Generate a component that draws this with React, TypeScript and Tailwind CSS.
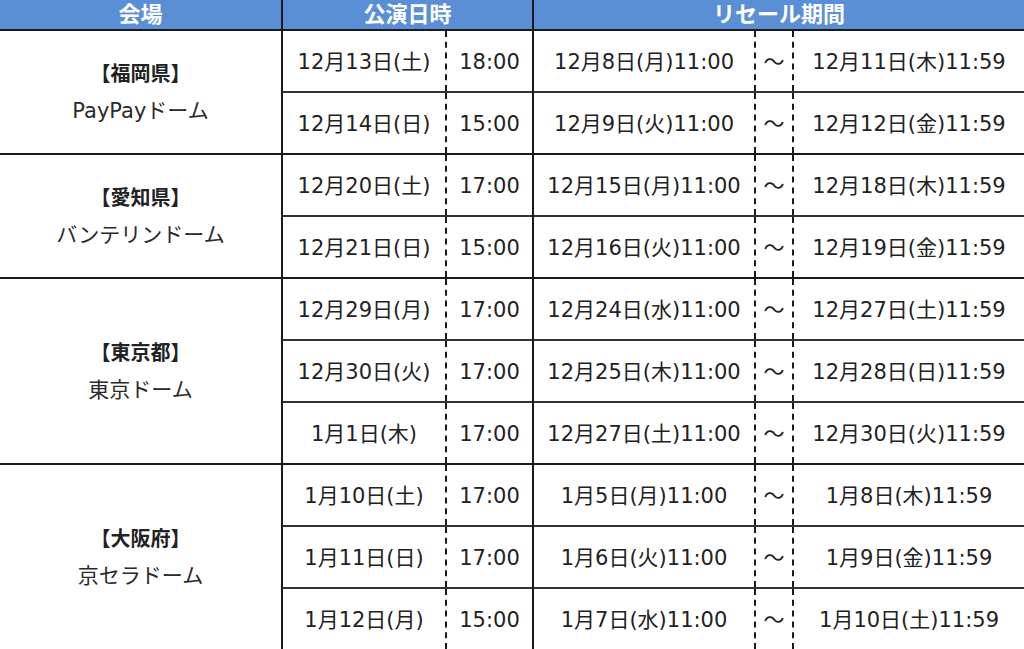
const font = { fontFamily: '"DejaVu Sans", "Noto Sans CJK JP", sans-serif' }

interface Show {
  date: string
  time: string
  from: string
  to: string
}

interface Venue {
  pref: string
  name: string
  shows: Show[]
}

const venues: Venue[] = [
  {
    pref: '【福岡県】',
    name: 'PayPayドーム',
    shows: [
      { date: '12月13日(土)', time: '18:00', from: '12月8日(月)11:00', to: '12月11日(木)11:59' },
      { date: '12月14日(日)', time: '15:00', from: '12月9日(火)11:00', to: '12月12日(金)11:59' },
    ],
  },
  {
    pref: '【愛知県】',
    name: 'バンテリンドーム',
    shows: [
      { date: '12月20日(土)', time: '17:00', from: '12月15日(月)11:00', to: '12月18日(木)11:59' },
      { date: '12月21日(日)', time: '15:00', from: '12月16日(火)11:00', to: '12月19日(金)11:59' },
    ],
  },
  {
    pref: '【東京都】',
    name: '東京ドーム',
    shows: [
      { date: '12月29日(月)', time: '17:00', from: '12月24日(水)11:00', to: '12月27日(土)11:59' },
      { date: '12月30日(火)', time: '17:00', from: '12月25日(木)11:00', to: '12月28日(日)11:59' },
      { date: '1月1日(木)', time: '17:00', from: '12月27日(土)11:00', to: '12月30日(火)11:59' },
    ],
  },
  {
    pref: '【大阪府】',
    name: '京セラドーム',
    shows: [
      { date: '1月10日(土)', time: '17:00', from: '1月5日(月)11:00', to: '1月8日(木)11:59' },
      { date: '1月11日(日)', time: '17:00', from: '1月6日(火)11:00', to: '1月9日(金)11:59' },
      { date: '1月12日(月)', time: '15:00', from: '1月7日(水)11:00', to: '1月10日(土)11:59' },
    ],
  },
]

export default function App() {
  return (
    <div className="w-[1024px] h-[649px] overflow-hidden bg-white" style={font}>
      <table className="w-[1024px] table-fixed border-collapse text-[21px] text-[#222]">
        <colgroup>
          <col className="w-[282px]" />
          <col className="w-[164px]" />
          <col className="w-[87px]" />
          <col className="w-[222px]" />
          <col className="w-[38px]" />
          <col className="w-[231px]" />
        </colgroup>
        <thead>
          <tr className="h-[30px] bg-[#5b8fd5] text-white text-[22px]">
            <th className="border-r-2 border-b-2 border-[#1a1a1a] font-bold leading-none">会場</th>
            <th colSpan={2} className="border-r-2 border-b-2 border-[#1a1a1a] font-bold leading-none">公演日時</th>
            <th colSpan={3} className="border-b-2 border-[#1a1a1a] font-bold leading-none">リセール期間</th>
          </tr>
        </thead>
        <tbody>
          {venues.map((v) =>
            v.shows.map((s, i) => (
              <tr
                key={v.pref + i}
                className={`h-[62px] ${i === v.shows.length - 1 ? 'border-b-2 border-[#1a1a1a]' : 'border-b-2 border-[#333]'}`}
              >
                {i === 0 && (
                  <td rowSpan={v.shows.length} className="border-r-2 border-b-2 border-[#1a1a1a] text-center pt-[2px]">
                    <div className="font-bold text-[20px] leading-[37px]">{v.pref}</div>
                    <div className="leading-[37px] text-[#2a2a2a]">{v.name}</div>
                  </td>
                )}
                <td className="border-r-2 border-dashed border-r-[#1a1a1a] text-center whitespace-nowrap pt-[3px]">{s.date}</td>
                <td className="border-r-2 border-r-[#1a1a1a] text-center pt-[3px]">{s.time}</td>
                <td className="border-r-2 border-dashed border-r-[#1a1a1a] text-center whitespace-nowrap pt-[3px]">{s.from}</td>
                <td className="border-r-2 border-dashed border-r-[#1a1a1a] text-center pt-[3px]">～</td>
                <td className="text-center whitespace-nowrap pt-[3px]">{s.to}</td>
              </tr>
            )),
          )}
        </tbody>
      </table>
    </div>
  )
}
